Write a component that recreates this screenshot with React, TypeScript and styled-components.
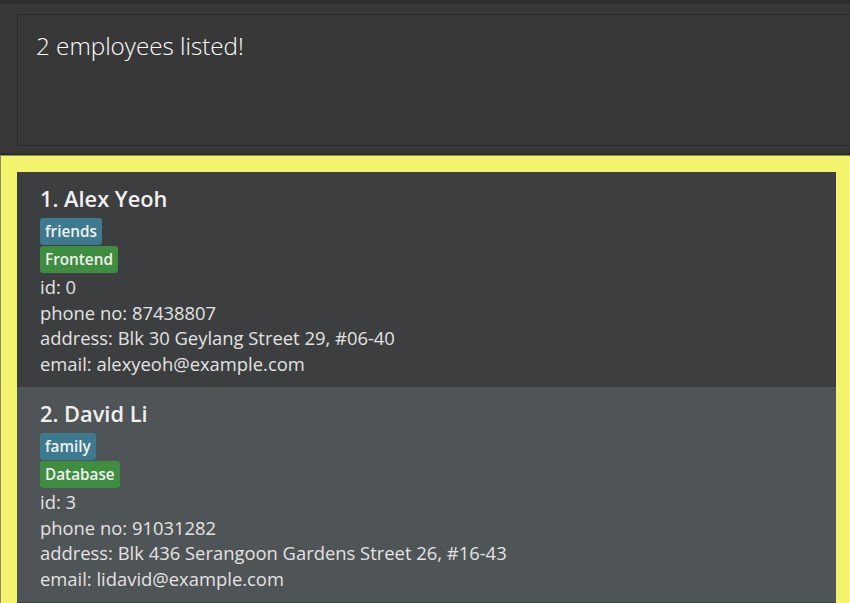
import React from "react"
import styled, { createGlobalStyle } from "styled-components"

const GlobalStyle = createGlobalStyle`
  html, body { margin: 0; padding: 0; background: #383838; }
  body { width: 850px; height: 603px; overflow: hidden; }
`

const Window = styled.div`
  display: flex;
  flex-direction: column;
  width: 850px;
  height: 603px;
  overflow: hidden;
  background: #383838;
  font-family: "Open Sans", "Segoe UI", sans-serif;
`

const MenuEdge = styled.div`
  height: 4px;
  background: #2d2d2d;
  flex-shrink: 0;
`

const ResultPane = styled.div`
  padding: 10px 0 7px 17px;
  flex-shrink: 0;
`

const ResultBox = styled.div`
  width: 850px;
  height: 132px;
  border: 1px solid #2c2c2c;
  background: #383838;
  padding: 16px 18px;
  box-sizing: border-box;
  color: #ffffff;
  font-weight: 300;
  font-size: 24.2px;
  line-height: 30px;
`

const Divider = styled.div`
  height: 2px;
  background: #2d2d2d;
  border-bottom: 1px solid #8a8a55;
  flex-shrink: 0;
`

const ListPane = styled.div`
  flex: 1;
  background: #f3f36d;
  padding: 16px 14px 0 16px;
  border-left: 1px solid #8c8c58;
  min-height: 0;
`

const ListView = styled.div`
  height: 100%;
  background: #3c3e3f;
  display: flex;
  flex-direction: column;
`

const Card = styled.div<{ $alt?: boolean }>`
  background: ${(p) => (p.$alt ? "#4f5456" : "#3c3e3f")};
  padding: 12px 23px 11px;
  display: flex;
  flex-direction: column;
  align-items: flex-start;
  color: #e6e6e6;
`

const Name = styled.div`
  font-size: 21.8px;
  font-weight: 600;
  line-height: 30px;
  color: #f0f0f0;
  margin-bottom: 4px;
`

const Tag = styled.span<{ $kind: "group" | "role" }>`
  background: ${(p) => (p.$kind === "group" ? "#3d7a8f" : "#3f8d40")};
  color: #f2f2f2;
  font-size: 15.3px;
  font-weight: 600;
  line-height: 27px;
  padding: 0 5px;
  border-radius: 3px;
  margin-bottom: 1px;
`

const Field = styled.div`
  font-size: 18.4px;
  line-height: 25.5px;
  color: #e3e3e3;
`

type Employee = {
  name: string
  group: string
  role: string
  id: number
  phone: string
  address: string
  email: string
}

const employees: Employee[] = [
  {
    name: "Alex Yeoh",
    group: "friends",
    role: "Frontend",
    id: 0,
    phone: "87438807",
    address: "Blk 30 Geylang Street 29, #06-40",
    email: "alexyeoh@example.com",
  },
  {
    name: "David Li",
    group: "family",
    role: "Database",
    id: 3,
    phone: "91031282",
    address: "Blk 436 Serangoon Gardens Street 26, #16-43",
    email: "lidavid@example.com",
  },
]

const EmployeeCard = ({ e, index }: { e: Employee; index: number }) => (
  <Card $alt={index % 2 === 1}>
    <Name>
      {index + 1}. {e.name}
    </Name>
    <Tag $kind="group">{e.group}</Tag>
    <Tag $kind="role">{e.role}</Tag>
    <Field>id: {e.id}</Field>
    <Field>phone no: {e.phone}</Field>
    <Field>address: {e.address}</Field>
    <Field>email: {e.email}</Field>
  </Card>
)

export default function App() {
  return (
    <>
      <GlobalStyle />
      <Window>
        <MenuEdge />
        <ResultPane>
          <ResultBox>{employees.length} employees listed!</ResultBox>
        </ResultPane>
        <Divider />
        <ListPane>
          <ListView>
            {employees.map((e, i) => (
              <EmployeeCard e={e} index={i} key={e.id} />
            ))}
          </ListView>
        </ListPane>
      </Window>
    </>
  )
}
